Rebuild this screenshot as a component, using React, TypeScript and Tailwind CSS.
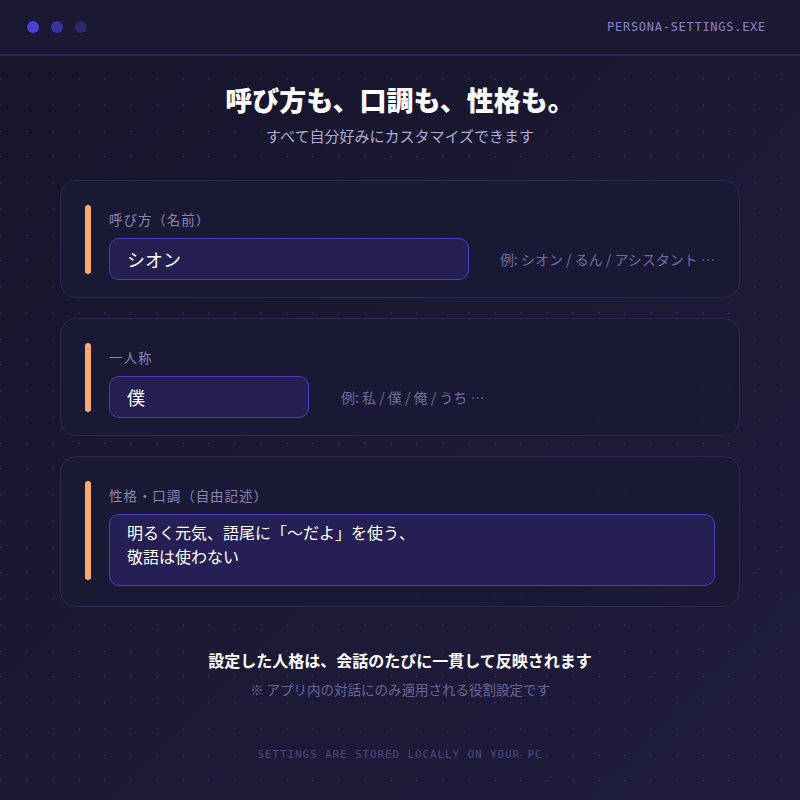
import React from 'react';

const jp = "font-['Noto_Sans_CJK_JP','Noto_Sans',sans-serif]";
const mono = "font-['DejaVu_Sans_Mono','Liberation_Mono',monospace]";

interface FieldCardProps {
  label: string;
  tall?: boolean;
  children: React.ReactNode;
}

const FieldCard: React.FC<FieldCardProps> = ({ label, tall, children }) => (
  <div
    className={`flex gap-[18px] rounded-2xl border border-[#2c2952] bg-[#1b1935]/90 px-6 pt-6 ${tall ? 'pb-5' : 'pb-[17px]'}`}
  >
    {/* accent bar */}
    <div className="mb-1.5 w-1.5 shrink-0 self-stretch rounded-full bg-[#fbab70]" />
    <div className="flex flex-1 flex-col pt-[5px]">
      <div className="h-[18px] text-[13.5px] leading-[18px] tracking-[0.07em] text-[#8a85b3]">{label}</div>
      <div className="mt-2.5">{children}</div>
    </div>
  </div>
);

const App: React.FC = () => {
  return (
    <div
      className={`${jp} flex h-[800px] w-full flex-col overflow-hidden bg-[#18162e] [background-image:radial-gradient(circle,rgba(130,120,210,0.14)_1px,transparent_1.6px),linear-gradient(135deg,#16142a_0%,#1b1933_50%,#201d3f_100%)] [background-size:26px_26px,100%_100%] [background-position:-12px_-12px,0_0]`}
    >
      {/* Title bar */}
      <header className="flex h-14 shrink-0 items-center justify-between border-b-2 border-[#2b2853] bg-[#1a1833] pl-[27px] pr-[34px]">
        <div className="flex items-center gap-3">
          <span className="h-3 w-3 rounded-full bg-[#4b40d6]" />
          <span className="h-3 w-3 rounded-full bg-[#3a32a0]" />
          <span className="h-3 w-3 rounded-full bg-[#2c2870]" />
        </div>
        <span className={`${mono} text-[12px] tracking-[0.06em] text-[#8a84c4]`}>PERSONA-SETTINGS.EXE</span>
      </header>

      <main className="flex flex-col items-center pt-7">
        <h1 className="text-[27px] font-black leading-8 text-white">呼び方も、口調も、性格も。</h1>
        <p className="mt-2.5 text-[15px] leading-5 text-[#b0abd4]">すべて自分好みにカスタマイズできます</p>

        <div className="mt-[34px] flex w-[680px] flex-col gap-5">
          <FieldCard label="呼び方（名前）">
            <div className="flex items-center justify-between">
              <div className="flex h-[42px] w-[360px] items-center rounded-[10px] border border-[#4a40c4] bg-[#241f50] px-[17px] text-[18px] text-white">
                シオン
              </div>
              <span className="text-[14px] text-[#716c9f]">例: シオン / るん / アシスタント …</span>
            </div>
          </FieldCard>

          <FieldCard label="一人称">
            <div className="flex items-center gap-8">
              <div className="flex h-[42px] w-[200px] items-center rounded-[10px] border border-[#4a40c4] bg-[#241f50] px-[17px] text-[18px] text-white">
                僕
              </div>
              <span className="text-[14px] text-[#716c9f]">例: 私 / 僕 / 俺 / うち …</span>
            </div>
          </FieldCard>

          <FieldCard label="性格・口調（自由記述）" tall>
            <div className="h-[72px] rounded-[10px] border border-[#4a40c4] bg-[#261f55] px-[17px] pt-[5px] text-[16px] leading-6 text-white">
              明るく元気、語尾に「〜だよ」を使う、
              <br />
              敬語は使わない
            </div>
          </FieldCard>
        </div>

        <p className="mt-[42px] text-[16px] font-bold leading-[22px] text-white">設定した人格は、会話のたびに一貫して反映されます</p>
        <p className="mt-2 text-[13.5px] leading-5 text-[#6b6699]">※ アプリ内の対話にのみ適用される役割設定です</p>
        <p className={`${mono} mt-12 text-[11px] leading-4 tracking-[0.08em] text-[#4d4881]`}>
          SETTINGS ARE STORED LOCALLY ON YOUR PC
        </p>
      </main>
    </div>
  );
};

export default App;
